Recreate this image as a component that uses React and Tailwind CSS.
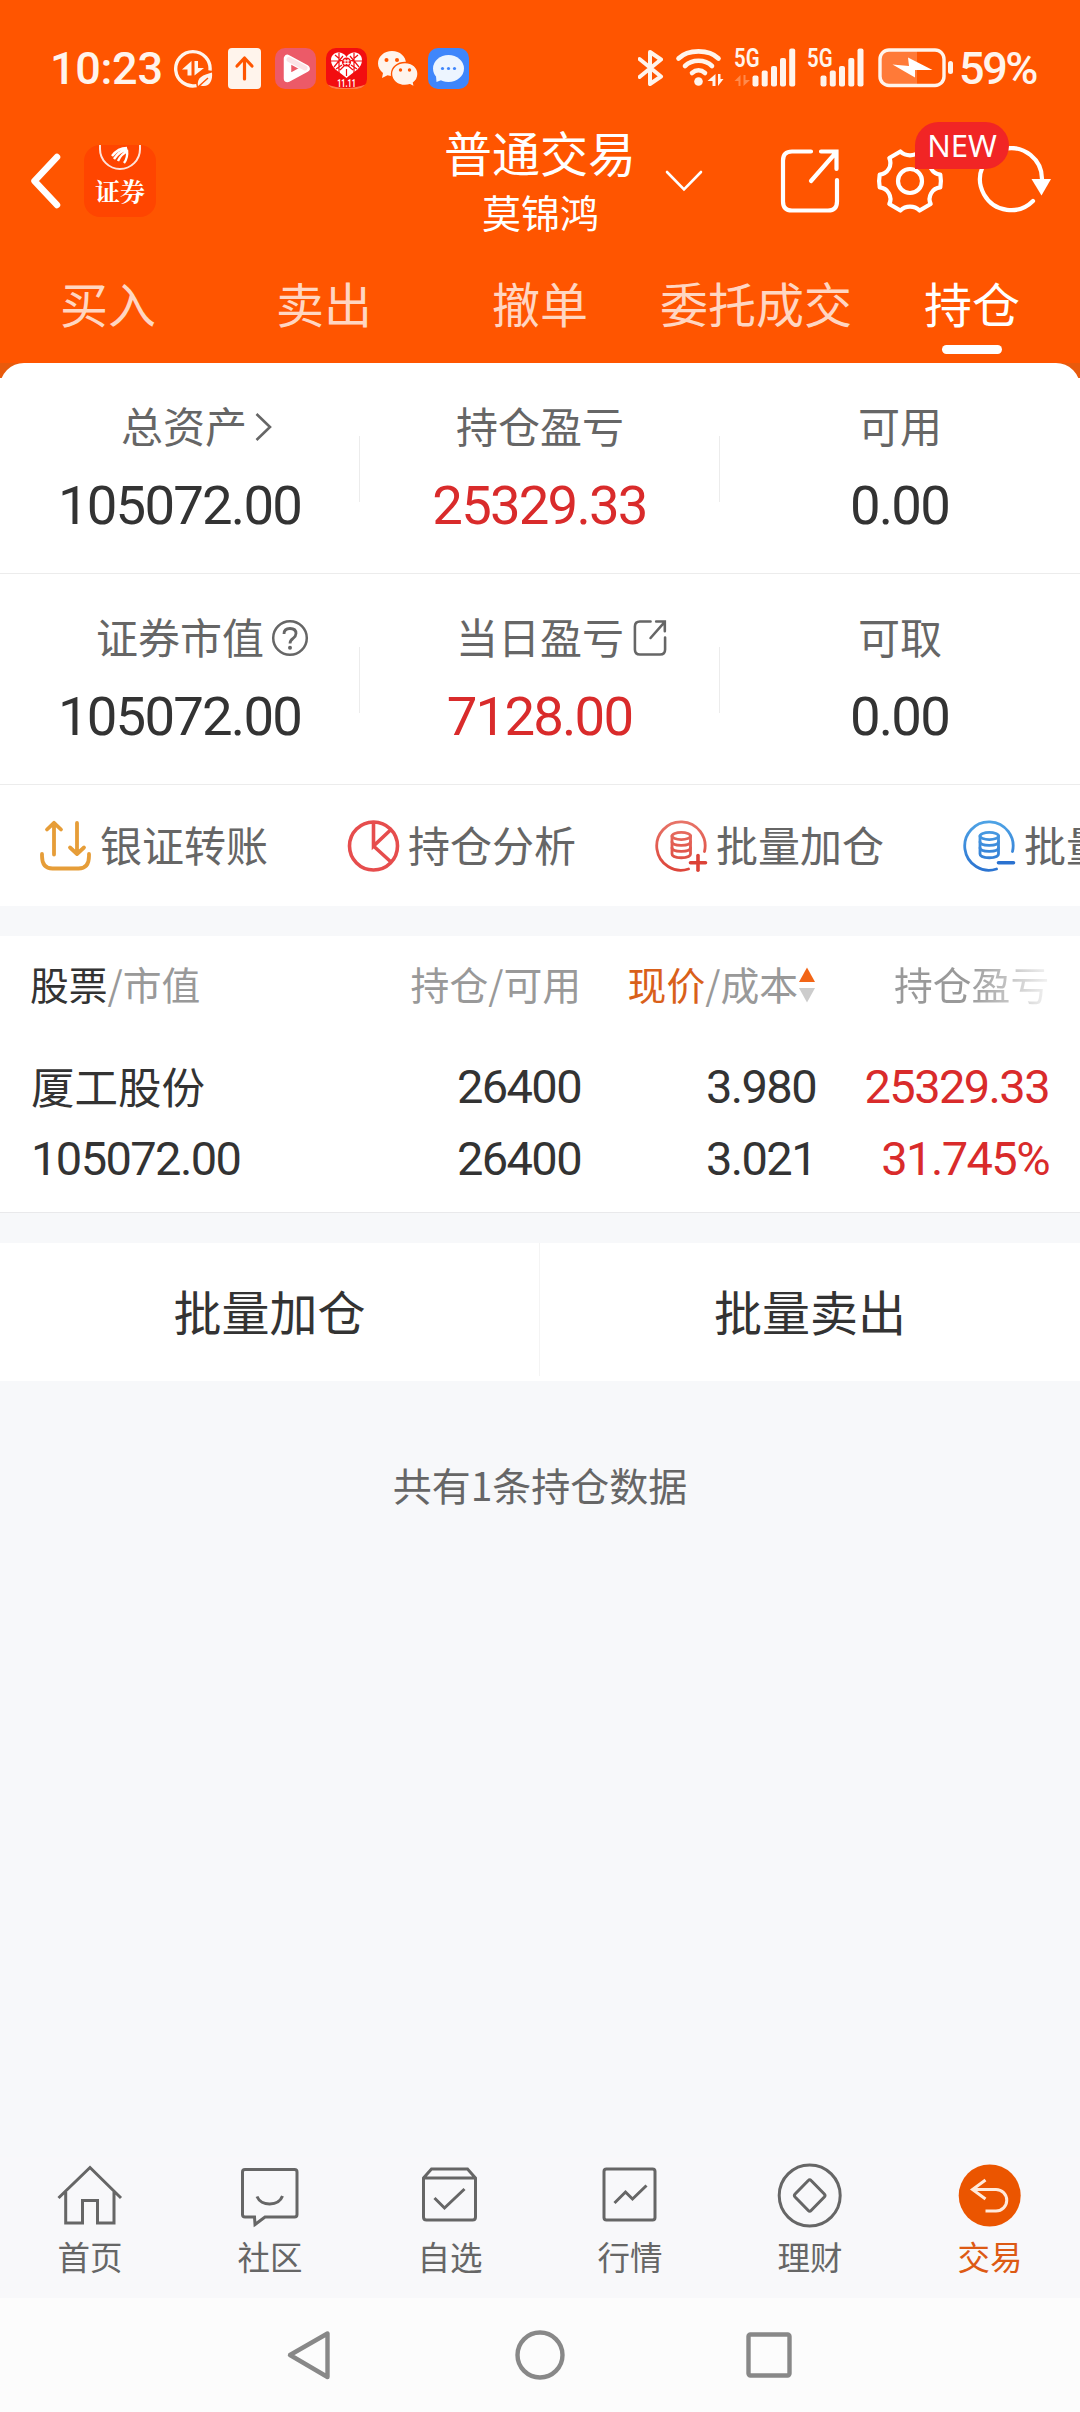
import React, { useState } from 'react';

const topTabs = ['买入', '卖出', '撤单', '委托成交', '持仓'];

const summary = [
  [
    { label: '总资产', value: '105072.00', icon: 'chevron' },
    { label: '持仓盈亏', value: '25329.33', red: true },
    { label: '可用', value: '0.00' },
  ],
  [
    { label: '证券市值', value: '105072.00', icon: 'help' },
    { label: '当日盈亏', value: '7128.00', red: true, icon: 'share' },
    { label: '可取', value: '0.00' },
  ],
];

const holdings = [
  { name: '厦工股份', value: '105072.00', count: '26400', usable: '26400', price: '3.980', cost: '3.021', profit: '25329.33', rate: '31.745%' },
];

// ---------- status bar ----------
const StatusLeftIcons = () => (
  <div className="flex gap-[10px]">
    {/* data saver */}
    <svg className="h-[41px] w-[41px]" viewBox="0 0 41 41" fill="none">
      <path d="M37 22.500 A17.200 17.200 0 1 0 23.500 37.600" stroke="#fff4ec" strokeWidth="3.400" />
      <path d="M18.500 13 V27.500 H14.500 V21.500 H9 Z M21.500 27.500 V13 H25 V20 H31 Z" fill="#fff4ec" />
      <path d="M25 38.500 C23.500 29 30 27 39 24.500 C40 33 36 40 27.500 37.500 Z" fill="#fff4ec" />
      <path d="M25 39 L35 30" stroke="#ff5500" strokeWidth="1.400" />
    </svg>
    {/* upload */}
    <svg className="h-[41px] w-[41px]" viewBox="0 0 41 41" fill="none">
      <rect x="4" y="0" width="33" height="41" rx="4" fill="#fff4ec" />
      <path d="M20.500 31 V11 M13 18 L20.500 10 L28 18" stroke="#ff5500" strokeWidth="3.200" strokeLinecap="round" strokeLinejoin="round" />
    </svg>
    {/* video */}
    <svg className="h-[41px] w-[41px]" viewBox="0 0 41 41" fill="none">
      <rect width="41" height="41" rx="10" fill="#ec5a68" />
      <path d="M12.500 10.500 V30.500 L31 20.500 Z" fill="#ec5a68" stroke="#fff" strokeWidth="7.500" strokeLinejoin="round" />
      <path d="M14 11.500 L30 20" stroke="#fbe3e6" strokeWidth="5" strokeLinecap="round" />
    </svg>
    {/* shopping festival */}
    <svg className="h-[41px] w-[41px] overflow-visible" viewBox="0 0 41 41">
      <clipPath id="fest"><rect width="41" height="41" rx="10" /></clipPath>
      <g clipPath="url(#fest)">
        <rect width="41" height="41" fill="#f20d10" />
        <path d="M0 36 Q20 44 41 36 V41 H0 Z" fill="#ff7a45" />
      </g>
      <path d="M20.500 9 C17 2 5 3 5 12 C5 20 12 23 20.500 30 C29 23 36 20 36 12 C36 3 24 2 20.500 9 Z" fill="#fff" />
      <path d="M13 5 V25 M28 5 V25 M5 13 H15 M26 13 H36 M8 19 L17 8 M33 19 L24 8 M14 22 L20 16 L27 22 M9 7 L16 13 M32 7 L25 13 M20.500 21 V28 M10 21 L16 17 M31 21 L25 17" stroke="#f20d10" strokeWidth="1.200" fill="none" />
      <circle cx="20.500" cy="14" r="4.600" fill="#f20d10" />
      <path d="M19 11 V17 M22 11 V17 M17.500 12.800 H23.500 M17.500 15.400 H23.500" stroke="#fff" strokeWidth="1" />
      <text x="20.500" y="39" textAnchor="middle" fontSize="10" fontWeight="700" textLength="18.500" lengthAdjust="spacingAndGlyphs" fill="#fff" fontFamily="Roboto, sans-serif">11.11</text>
    </svg>
    {/* wechat */}
    <svg className="h-[41px] w-[41px]" viewBox="0 0 41 41" fill="#fff4ec">
      <path d="M15 3 C7 3 1 8.500 1 15.500 C1 19.500 3 22.500 6 25 L5 30 L10.500 27.300 C12 27.700 13.500 28 15 28 C23 28 29 22.500 29 15.500 C29 8.500 23 3 15 3 Z" />
      <path d="M28 14.500 C20.500 14.500 14.500 19.500 14.500 26 C14.500 32.500 20.500 37.500 28 37.500 C29.800 37.500 31.500 37.200 33 36.700 L37.500 39 L36.500 34.800 C39.300 32.700 41 29.500 41 26 C41 19.500 35.500 14.500 28 14.500 Z" stroke="#ff5500" strokeWidth="1.400" />
      <g fill="#ff5500">
        <circle cx="9.500" cy="12" r="2" />
        <circle cx="20" cy="12" r="2" />
        <circle cx="23.500" cy="22" r="1.700" />
        <circle cx="32.500" cy="22" r="1.700" />
      </g>
    </svg>
    {/* messages */}
    <svg className="h-[41px] w-[41px]" viewBox="0 0 41 41">
      <rect width="41" height="41" rx="10" fill="#3f86fb" />
      <ellipse cx="20.500" cy="20.500" rx="15.500" ry="13.500" fill="#edf5ff" />
      <path d="M8 28 L8.500 34 L16 31 Z" fill="#edf5ff" />
      <circle cx="14.500" cy="20.500" r="1.600" fill="#3f86fb" />
      <circle cx="20.500" cy="20.500" r="1.600" fill="#3f86fb" />
      <circle cx="26.500" cy="20.500" r="1.600" fill="#3f86fb" />
    </svg>
  </div>
);

const Signal = ({ arrows }) => (
  <svg className="h-[41px] w-[62px] overflow-visible" viewBox="0 0 62 41">
    <text x="0" y="19" fontSize="25" fontWeight="600" textLength="25.500" lengthAdjust="spacingAndGlyphs" fill="#fff4ec" fontFamily="Roboto, sans-serif">5G</text>
    {arrows && <path d="M6.500 27 V38 H4.500 V33 H0.500 Z M9.500 38 V27 H11.500 V32 H16 Z" fill="#ff8a4d" />}
    <g fill="#fff4ec">
      <rect x={arrows ? 18.5 : 13.5} y="27.500" width="6" height="11" rx="2" />
      <rect x={arrows ? 27.7 : 22.8} y="22.500" width="6" height="16" rx="2" />
      <rect x={arrows ? 37 : 32} y="18" width="6" height="20.500" rx="2" />
      <rect x={arrows ? 46 : 41.3} y="10" width="6" height="28.500" rx="2" />
      <rect x={arrows ? 55.2 : 50.5} y="0.500" width="6" height="38" rx="2" />
    </g>
  </svg>
);

const StatusBar = () => (
  <div className="flex h-[118px] items-start pt-[48px] text-[#fff4ec]">
    <div className="ml-[50px] w-[123px] font-[Roboto,sans-serif] text-[45px] leading-[41px] font-medium tracking-[-0.3px]">10:23</div>
    <StatusLeftIcons />
    <div className="ml-auto flex pr-[42px]">
      <svg className="h-[41px] w-[26px]" viewBox="0 0 26 41" fill="none">
        <path d="M1.500 11 L23 28.500 L12 36 V4 L23 11.500 L1.500 29" stroke="#fff4ec" strokeWidth="4" strokeLinejoin="round" strokeLinecap="round" />
      </svg>
      <svg className="ml-[11px] h-[41px] w-[50px]" viewBox="0 0 50 41" fill="none" stroke="#fff4ec" strokeWidth="4.600" strokeLinecap="round">
        <path d="M3.500 10.500 C13 1 34 1 43.500 10.500" />
        <path d="M10 18 C17 11 30 11 37 18" />
        <path d="M17 25 C21 21.500 26 21.500 30 25" />
        <circle cx="23.500" cy="33.500" r="4.300" fill="#fff4ec" stroke="none" />
        <path d="M40.500 26 V38 H37.500 V33 H32.500 Z M43 38 V26 H45.500 V31 H48.500 Z" fill="#fff4ec" stroke="none" />
      </svg>
      <div className="ml-[9px]"><Signal arrows /></div>
      <div className="ml-[11px]"><Signal /></div>
      <svg className="ml-[8px] h-[41px] w-[80px]" viewBox="0 0 80 41" fill="none">
        <path d="M12 2 H40 V37 H12 Q3 37 3 28 V11 Q3 2 12 2 Z" fill="#ff7a38" />
        <rect x="3" y="2" width="64" height="35.500" rx="9" stroke="#fff4ec" strokeWidth="3.400" />
        <rect x="71" y="13" width="5" height="13" rx="2.500" fill="#fff4ec" />
        <path d="M15.500 16.500 L32 18 L31 9.500 L55.500 22 L38 22 L38 29.500 Z" fill="#fff" />
      </svg>
      <div className="ml-[2px] w-[79px] font-[Roboto,sans-serif] text-[45px] leading-[41px] font-medium tracking-[-2.4px]">59%</div>
    </div>
  </div>
);

// ---------- header ----------
const ShareIcon = ({ className, stroke }) => (
  <svg className={className} viewBox="0 0 64 68" fill="none" stroke="currentColor" strokeWidth={stroke} strokeLinecap="round">
    <path d="M33 4.500 H14 Q5 4.500 5 13.500 V54.500 Q5 63.500 14 63.500 H50 Q59 63.500 59 54.500 V33" />
    <path d="M33 34 L58 5.500 M43 4.500 H58.500 V22" />
  </svg>
);

const Header = () => (
  <div className="grid h-[126px] grid-cols-[440px_200px_1fr] text-white">
    <div className="flex items-center">
      <svg className="ml-[28px] h-[60px] w-[36px]" viewBox="0 0 36 60" fill="none">
        <path d="M29 6 L6.500 30 L29 54" stroke="white" strokeWidth="6.500" strokeLinecap="round" strokeLinejoin="round" />
      </svg>
      <div className="ml-[20px] flex h-[72px] w-[72px] flex-col items-center rounded-[16px] bg-[#ff4500]">
        <svg className="h-[28px] w-[44px]" viewBox="0 0 44 28" fill="none">
          <path d="M2 0 V4 A20 20 0 0 0 42 4 V0" stroke="#ffe3da" strokeWidth="2" />
          <path d="M14 11 Q20 3 29 3 M16 14 Q21 6 29.500 4.500 M20 16 Q23 9 30 6 M26 18 Q30 13 29 5" stroke="#fff" strokeWidth="2.400" />
        </svg>
        <div className="font-['Noto_Serif_CJK_SC','Noto_Sans_CJK_SC',serif] text-[25px] leading-[34px] font-bold">证券</div>
      </div>
    </div>
    <div className="flex flex-col items-center pt-[3px]">
      <div className="text-[48px] leading-[60px] whitespace-nowrap">普通交易</div>
      <div className="pl-px text-[39px] leading-[60px] whitespace-nowrap">莫锦鸿</div>
    </div>
    <div className="flex items-center">
      <svg className="ml-[24px] h-[24px] w-[40px]" viewBox="0 0 40 24" fill="none">
        <path d="M3 3 L20 20.500 L37 3" stroke="white" strokeWidth="2.600" strokeLinecap="round" />
      </svg>
      <ShareIcon className="ml-[74px] h-[68px] w-[64px]" stroke="4.2" />
      <div className="relative ml-[33px]">
        <svg className="h-[70px] w-[70px]" viewBox="0 0 70 70" fill="none" stroke="white" strokeWidth="4.200" strokeLinejoin="round">
          <path d="M65.300 28.600 Q66.500 35 65.300 41.400 A11.700 11.700 0 0 0 55.700 58 L44.600 64.500 A14 14 0 0 0 25.400 64.500 L14.300 58 A11.700 11.700 0 0 0 4.700 41.400 Q3.500 35 4.700 28.600 A11.700 11.700 0 0 0 14.300 12 L25.400 5.500 A14 14 0 0 0 44.600 5.500 L55.700 12 A11.700 11.700 0 0 0 65.300 28.600 Z" />
          <circle cx="35" cy="35" r="12" />
        </svg>
        <span className="absolute top-[-24px] left-[40px] z-10 flex h-[47px] w-[94px] items-center justify-center rounded-full rounded-bl-none bg-[#f12525] font-['Noto_Sans',sans-serif] text-[31px]">
          NEW
        </span>
      </div>
      <svg className="ml-[28px] h-[70px] w-[84px]" viewBox="0 0 84 70" fill="none">
        <path d="M60 55 A31 31 0 1 1 69 34" stroke="white" strokeWidth="4.200" strokeLinecap="round" />
        <path d="M58.500 33 H78 L68.500 49.500 Z" fill="white" />
      </svg>
    </div>
  </div>
);

const TopTabs = ({ active, onChange }) => (
  <div className="grid h-[119px] grid-cols-5">
    {topTabs.map((tab) => (
      <button
        key={tab}
        onClick={() => onChange(tab)}
        className={`flex flex-col items-center pt-[28px] text-[48px] leading-[60px] ${active === tab ? 'text-white' : 'text-[#ffd6c2]'}`}
      >
        {tab}
        {active === tab && <span className="mt-[13px] h-[9px] w-[60px] rounded-full bg-white" />}
      </button>
    ))}
  </div>
);

// ---------- summary ----------
const LabelIcon = ({ icon }) => {
  if (icon === 'chevron') {
    return (
      <svg className="h-[30px] w-[20px]" viewBox="0 0 20 30" fill="none">
        <path d="M2.500 2 L16 15 L2.500 28" stroke="#666" strokeWidth="2.600" />
      </svg>
    );
  }
  if (icon === 'help') {
    return (
      <svg className="h-[38px] w-[38px]" viewBox="0 0 38 38" fill="none" stroke="#666">
        <circle cx="19" cy="19" r="16.800" strokeWidth="2.500" />
        <path d="M13 15 Q13 9.500 19 9.500 Q25 9.500 25 14.500 Q25 17 22 19.500 Q19 21.500 19 24.500" strokeWidth="2.800" />
        <circle cx="19" cy="28.800" r="2" fill="#666" stroke="none" />
      </svg>
    );
  }
  return <ShareIcon className="h-[38px] w-[38px] text-[#666]" stroke="4.6" />;
};

const SummaryCell = ({ label, value, red, icon, last }) => (
  <div className="relative flex flex-col items-center pt-[34px]">
    <div className={`relative text-[42px] leading-[56px] text-[#666] ${icon === 'chevron' ? 'ml-[8px]' : ''}`}>
      {label}
      {icon && (
        <span className="absolute top-[30px] left-full ml-[7px] -translate-y-1/2">
          <LabelIcon icon={icon} />
        </span>
      )}
    </div>
    <div className={`mt-[22px] pr-[1px] font-[Roboto,sans-serif] text-[54.500px] leading-[60px] tracking-[-1.8px] ${red ? 'text-[#d92b2b]' : 'text-[#333]'}`}>
      {value}
    </div>
    {!last && <span className="absolute top-[73px] right-0 h-[66px] w-px bg-[#ececec]" />}
  </div>
);

// ---------- quick actions ----------
const CoinIcon = ({ from, to, id, minus }) => (
  <svg className="h-[54px] w-[54px]" viewBox="0 0 54 54" fill="none" stroke={`url(#${id})`} strokeWidth="2.800" strokeLinecap="round">
    <defs>
      <linearGradient id={id} gradientUnits="userSpaceOnUse" x1="0" y1="0" x2="0" y2="54">
        <stop offset="0" stopColor={from} />
        <stop offset="1" stopColor={to} />
      </linearGradient>
    </defs>
    <path d="M50.500 32.500 A24.200 24.200 0 1 0 34.500 50" />
    <path d="M18 17 V35 C18 40 36.500 40 36.500 35 V17" />
    <ellipse cx="27.300" cy="17" rx="9.300" ry="3.600" />
    <path d="M18 23 C18 27.500 36.500 27.500 36.500 23 M18 29 C18 33.500 36.500 33.500 36.500 29" />
    <path d="M36.500 43.800 H51.500" stroke={to} strokeWidth="3.600" />
    {!minus && <path d="M44 36.500 V51.300" stroke={to} strokeWidth="3.600" />}
  </svg>
);

const quickActions = [
  {
    label: '银证转账',
    icon: (
      <svg className="h-[54px] w-[54px]" viewBox="0 0 54 54" fill="none" stroke="#e69d38" strokeWidth="3.800" strokeLinecap="round" strokeLinejoin="round">
        <path d="M16 35.500 V4 M9 10.500 L16 3.800 L23 10.500" />
        <path d="M39 4 V35 M32 28.500 L39 35 L46 28.500" />
        <path d="M4 35 V37 Q4 49.500 14.500 49.500 H40.500 Q51 49.500 51 37 V35" />
      </svg>
    ),
  },
  {
    label: '持仓分析',
    icon: (
      <svg className="h-[54px] w-[54px]" viewBox="0 0 54 54" fill="none" stroke="#e64d4d" strokeWidth="3.600">
        <circle cx="27.500" cy="27" r="24" />
        <path d="M27.500 3 V27 L45 10.500 M27.500 27 L45 43" />
      </svg>
    ),
  },
  { label: '批量加仓', icon: <CoinIcon id="coinPlus" from="#e8766a" to="#dc4338" /> },
  { label: '批量卖出', icon: <CoinIcon id="coinMinus" from="#50a5e6" to="#2a72d0" minus /> },
];

const QuickActions = () => (
  <div className="flex h-[121px] items-center overflow-hidden pl-[38px]">
    {quickActions.map((item) => (
      <div key={item.label} className="flex w-[308px] shrink-0 items-center">
        {item.icon}
        <span className="mb-[3px] ml-[8px] text-[42px] leading-[56px] whitespace-nowrap text-[#666]">{item.label}</span>
      </div>
    ))}
  </div>
);

// ---------- holdings ----------
const HoldingsTable = () => (
  <div className="border-b border-[#e9e9eb] bg-white">
    <div className="grid h-[96px] grid-cols-[300px_281px_235px_1fr] items-center pr-[30px] pb-[3px] text-[38.800px] leading-[56px] whitespace-nowrap text-[#999]">
      <div className="pl-[30px]"><span className="text-[#333]">股票</span>/市值</div>
      <div className="text-right">持仓/可用</div>
      <div className="flex items-center justify-end">
        <span><span className="text-[#d9601a]">现价</span>/成本</span>
        <svg className="mt-[5px] h-[36px] w-[18px]" viewBox="0 0 18 36">
          <path d="M9 0.500 L17 15 H1 Z" fill="#f26516" />
          <path d="M9 35.500 L17 21 H1 Z" fill="#ccc" />
        </svg>
      </div>
      <div className="bg-linear-to-r from-[#999] from-65% to-[#f4f4f4] bg-clip-text pl-[78px] text-transparent">持仓盈亏</div>
    </div>
    {holdings.map((row) => (
      <div key={row.name} className="grid h-[180px] grid-cols-[300px_281px_235px_1fr] pt-[19px] pr-[31px] text-right font-[Roboto,sans-serif] text-[47px] leading-[72px] tracking-[-1.6px] text-[#333]">
        <div className="pl-[31px] text-left">
          <div className="h-[72px] pb-[2px] font-['Noto_Sans_CJK_SC',sans-serif] text-[43.500px] leading-[70px] tracking-normal">{row.name}</div>
          <div>{row.value}</div>
        </div>
        <div>
          <div>{row.count}</div>
          <div>{row.usable}</div>
        </div>
        <div>
          <div>{row.price}</div>
          <div>{row.cost}</div>
        </div>
        <div className="text-[#d92b2b]">
          <div>{row.profit}</div>
          <div>{row.rate}</div>
        </div>
      </div>
    ))}
  </div>
);

// ---------- bottom navigation ----------
const navItems = [
  { label: '首页', icon: <path d="M4.500 38 L36 7.500 L67 38 M11.700 32 V63 H28.500 V40.500 H43.500 V63 H60 V32" /> },
  {
    label: '社区',
    icon: (
      <>
        <path d="M11 9.500 H60.500 Q63 9.500 63 12 V54.500 Q63 57 60.500 57 H31 L21 64.500 L20.500 57 H11 Q8.500 57 8.500 54.500 V12 Q8.500 9.500 11 9.500 Z" />
        <path d="M23 36.500 C27 46.500 44.500 46.500 48.500 36" />
      </>
    ),
  },
  {
    label: '自选',
    icon: (
      <>
        <path d="M9.500 18 L17.500 9 H53.500 L61.500 18 V57 Q61.500 60 58.500 60 H12.500 Q9.500 60 9.500 57 Z M9.500 18 H61.500" />
        <path d="M20.500 38 L30.500 48 L50.500 29" />
      </>
    ),
  },
  {
    label: '行情',
    icon: (
      <>
        <rect x="10" y="9" width="51" height="51" rx="2.500" />
        <path d="M20.500 43 L31.500 32 L38.500 39 L52.500 25.500" />
      </>
    ),
  },
  {
    label: '理财',
    icon: (
      <>
        <circle cx="35.700" cy="35.500" r="30.500" />
        <path d="M34.300 20.500 Q35.700 19 37.100 20.500 L50.300 34 Q51.700 35.500 50.300 37 L37.100 50.500 Q35.700 52 34.300 50.500 L21.100 37 Q19.700 35.500 21.100 34 Z" />
      </>
    ),
  },
  {
    label: '交易',
    active: true,
    icon: (
      <>
        <circle cx="35.700" cy="35.500" r="31" fill="#eb5500" stroke="none" />
        <path d="M31.500 20 L18.500 29.500 L31.500 39 M18.500 29.500 H42 A10.700 10.700 0 0 1 42 51 H31.500" stroke="#ffeadb" />
      </>
    ),
  },
];

const BottomNav = () => (
  <div className="grid h-[141px] grid-cols-6 bg-[#f8f8fa]">
    {navItems.map((item) => (
      <div key={item.label} className="flex flex-col items-center pt-[3px]">
        <svg className="h-[72px] w-[72px]" viewBox="0 0 72 72" fill="none" stroke="#666" strokeWidth="3">
          {item.icon}
        </svg>
        <span className={`mt-[4px] text-[32.500px] leading-[40px] ${item.active ? 'text-[#dd5a14]' : 'text-[#666]'}`}>{item.label}</span>
      </div>
    ))}
  </div>
);

const SystemNav = () => (
  <div className="flex h-[114px] items-center justify-center gap-[180px] bg-[#fcfcfc]">
    <svg className="h-[50px] w-[50px]" viewBox="0 0 50 50" fill="none" stroke="#888" strokeWidth="4.400" strokeLinejoin="round">
      <path d="M42.500 3.500 V47 L5 25 Z" />
    </svg>
    <svg className="h-[50px] w-[50px]" viewBox="0 0 50 50" fill="none" stroke="#888" strokeWidth="4.400">
      <circle cx="25" cy="25" r="22.500" />
    </svg>
    <svg className="h-[50px] w-[50px]" viewBox="0 0 50 50" fill="none" stroke="#888" strokeWidth="4.400">
      <rect x="3.500" y="4.500" width="41" height="41" rx="2" />
    </svg>
  </div>
);

const App = () => {
  const [tab, setTab] = useState('持仓');

  return (
    <div className="flex h-[2412px] w-[1080px] flex-col overflow-hidden bg-[#f7f8fa] font-['Noto_Sans_CJK_SC',sans-serif]">
      <div className="bg-[#ff5500]">
        <StatusBar />
        <Header />
        <TopTabs active={tab} onChange={setTab} />
      </div>
      <div className="bg-[linear-gradient(#e85a0c_15px,#ffffff_15px)]">
        <div className="rounded-t-[24px] bg-white">
          {summary.map((row) => (
            <div key={row[0].label} className="grid h-[211px] grid-cols-3 border-b border-[#ececec]">
              {row.map((cell, i) => (
                <SummaryCell key={cell.label} {...cell} last={i === 2} />
              ))}
            </div>
          ))}
          <QuickActions />
        </div>
      </div>
      <div className="mt-[30px]">
        <HoldingsTable />
      </div>
      <div className="mt-[30px] grid h-[138px] grid-cols-2 bg-white pb-[5px] text-[48px] text-[#333]">
        <button className="flex items-center justify-center border-r border-[#f4f4f4]">批量加仓</button>
        <button className="flex items-center justify-center">批量卖出</button>
      </div>
      <div className="mt-[75px] text-center text-[39px] leading-[56px] text-[#666]">共有1条持仓数据</div>
      <div className="mt-auto">
        <BottomNav />
        <SystemNav />
      </div>
    </div>
  );
};

export default App;
